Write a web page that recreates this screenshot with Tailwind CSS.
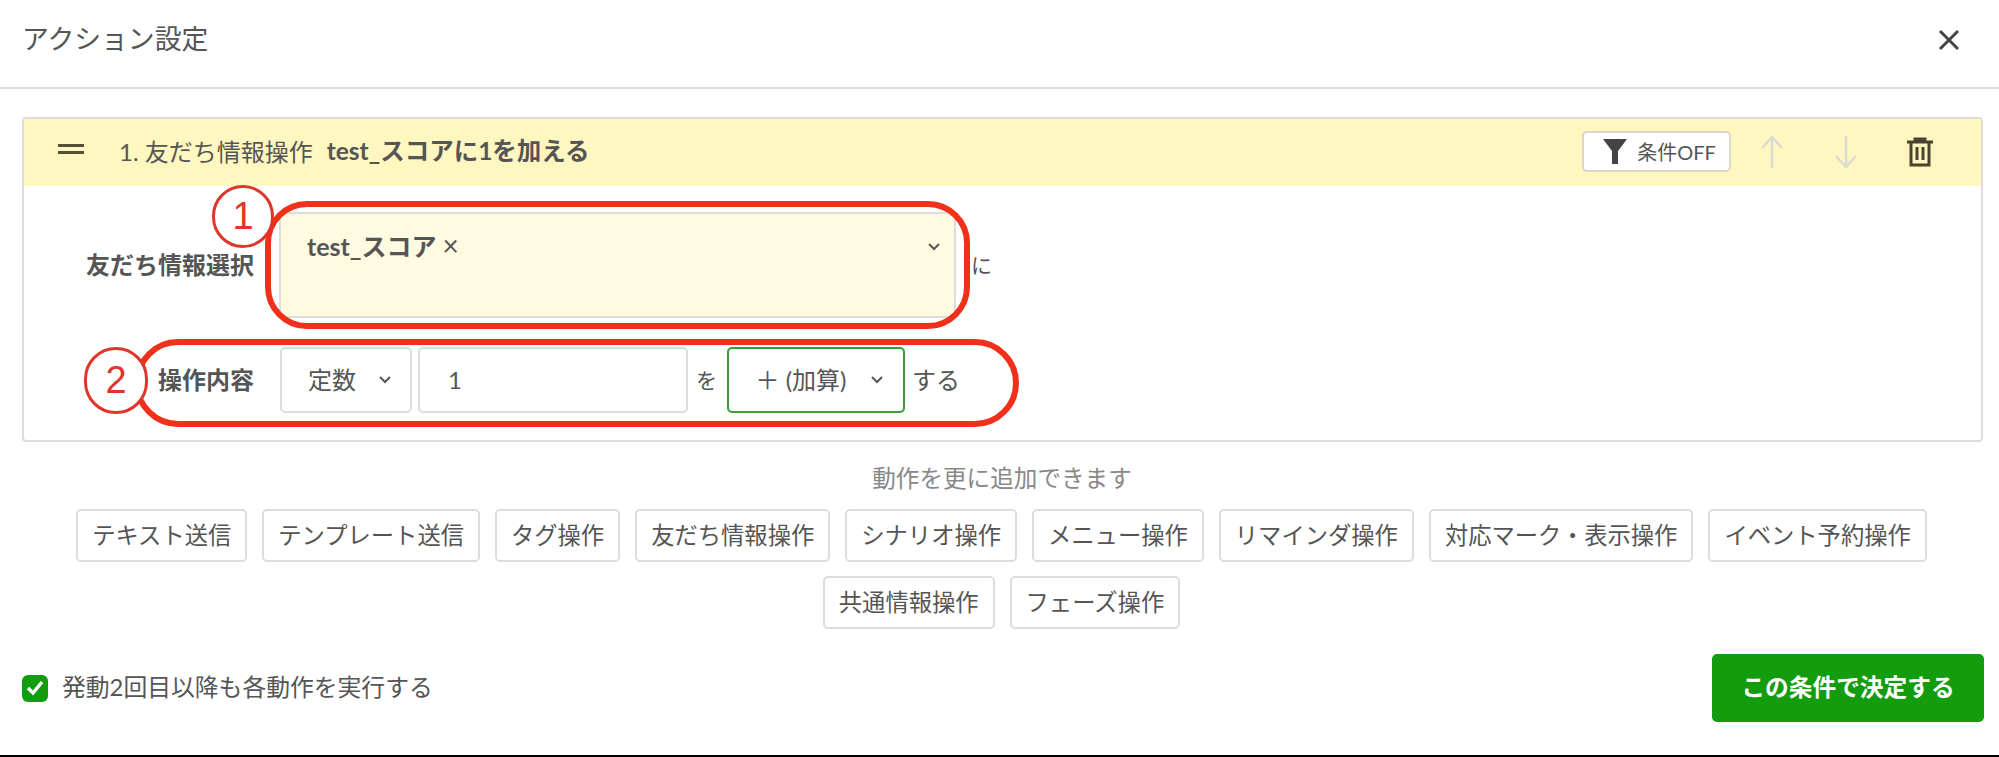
<!DOCTYPE html>
<html lang="ja">
<head>
    <meta charset="UTF-8">
    <title>アクション設定</title>
    <script src="https://cdn.jsdelivr.net/npm/@tailwindcss/browser@4"></script>
</head>
<body class="bg-white">
    <div class="relative w-[1999px] h-[757px] overflow-hidden flex flex-col border-b-2 border-black text-[#555] text-[24px] font-['Lato','Noto_Sans_CJK_JP',sans-serif]">

        <!-- modal header -->
        <header class="h-[89px] shrink-0 flex items-center justify-between pl-[22px] pr-[39px] border-b-2 border-[#ddd]">
            <h1 class="text-[26.8px] font-normal pb-[9px]">アクション設定</h1>
            <svg class="w-[22px] h-[22px] mb-[8px]" viewBox="0 0 22 22" fill="none" stroke="#444" stroke-width="3"><path d="M2 2l18 18M20 2L2 20"/></svg>
        </header>

        <!-- action card -->
        <section class="mt-[28px] ml-[22px] mr-[16px] h-[325px] shrink-0 border-2 border-[#ddd] rounded-[4px]">
            <div class="h-[67px] bg-[#fef7bf] flex items-center pl-[34px] pr-[48px] pb-[2px]">
                <svg class="w-[26px] h-[10px] mb-[6px]" viewBox="0 0 26 10" fill="#55503a"><rect width="26" height="3"/><rect y="7" width="26" height="3"/></svg>
                <span class="ml-[35px]">1. 友だち情報操作</span>
                <span class="ml-[14px] text-[24.5px] font-bold">test_スコアに1を加える</span>
                <button class="ml-auto mr-[3px] pl-[6px] w-[149px] h-[41px] bg-white border-2 border-[#ddd6c8] rounded-[5px] flex items-center justify-center gap-[10px] text-[20px]">
                    <svg class="w-[24px] h-[25px]" viewBox="0 0 24 25" fill="#444"><path d="M0 0h24L15 12v13h-6V12z"/></svg>
                    条件OFF
                </button>
                <svg class="ml-[26px] w-[24px] h-[34px]" viewBox="0 0 24 34" fill="none" stroke="#dcd8d2" stroke-width="2.4"><path d="M12 33V2M2 13L12 2l10 11"/></svg>
                <svg class="ml-[50px] w-[24px] h-[34px]" viewBox="0 0 24 34" fill="none" stroke="#dcd8d2" stroke-width="2.4"><path d="M12 1v31M2 21l10 11 10-11"/></svg>
                <svg class="ml-[49px] w-[26px] h-[30px]" viewBox="0 0 26 30" fill="none" stroke="#4a4530" stroke-width="3"><path d="M0 5h26M8 5V2h10v3M4 5v23h18V5M10 10v13M16 10v13"/></svg>
            </div>

            <div class="flex flex-col gap-[29px] pt-[26px]">
                <div class="flex items-center">
                    <label class="w-[230px] text-right font-bold">友だち情報選択</label>
                    <div class="ml-[25px] w-[677px] h-[106px] bg-[#fffbe0] border-2 border-[#ddd] rounded-[4px] flex justify-between pl-[26px] pr-[14px] pt-[15px]">
                        <span class="font-bold text-[25px] h-[32px] leading-[32px]">test_スコア<span class="font-normal text-[28px] ml-[6px]">×</span></span>
                        <svg class="w-[12px] h-[8px] mt-[14px]" viewBox="0 0 12 8" fill="none" stroke="#555" stroke-width="2"><path d="M1 1l5 5 5-5"/></svg>
                    </div>
                    <span class="ml-[15px] text-[21px]">に</span>
                </div>

                <div class="flex items-center">
                    <label class="w-[230px] text-right font-bold">操作内容</label>
                    <div class="ml-[26px] w-[132px] h-[66px] border-2 border-[#ddd] rounded-[5px] flex items-center justify-center gap-[22px] pl-[8px]">
                        定数
                        <svg class="w-[14px] h-[10px]" viewBox="0 0 14 10" fill="none" stroke="#555" stroke-width="2"><path d="M2 2l5 5 5-5"/></svg>
                    </div>
                    <div class="ml-[6px] w-[270px] h-[66px] border-2 border-[#ddd] rounded-[5px] flex items-center pl-[28px]">1</div>
                    <span class="ml-[8px] w-[31px] text-[21px]">を</span>
                    <div class="w-[178px] h-[66px] border-2 border-[#3f9a3a] rounded-[5px] flex items-center justify-center gap-[24px]">
                        <span class="whitespace-nowrap ml-[8px]">＋ (加算)</span>
                        <svg class="w-[14px] h-[10px]" viewBox="0 0 14 10" fill="none" stroke="#555" stroke-width="2"><path d="M2 2l5 5 5-5"/></svg>
                    </div>
                    <span class="ml-[7px]">する</span>
                </div>
            </div>
        </section>

        <!-- add more actions -->
        <p class="mt-[20px] pl-[5px] text-center text-[#888] text-[23.6px] leading-[32px]">動作を更に追加できます</p>
        <div class="mt-[15px] ml-[22px] mr-[18px] flex flex-wrap justify-center gap-x-[15px] gap-y-[14px] text-[23.3px]">
            <button class="h-[53px] px-[14px] border-2 border-[#ddd] rounded-[5px]">テキスト送信</button>
            <button class="h-[53px] px-[14px] border-2 border-[#ddd] rounded-[5px]">テンプレート送信</button>
            <button class="h-[53px] px-[14px] border-2 border-[#ddd] rounded-[5px]">タグ操作</button>
            <button class="h-[53px] px-[14px] border-2 border-[#ddd] rounded-[5px]">友だち情報操作</button>
            <button class="h-[53px] px-[14px] border-2 border-[#ddd] rounded-[5px]">シナリオ操作</button>
            <button class="h-[53px] px-[14px] border-2 border-[#ddd] rounded-[5px]">メニュー操作</button>
            <button class="h-[53px] px-[14px] border-2 border-[#ddd] rounded-[5px]">リマインダ操作</button>
            <button class="h-[53px] px-[14px] border-2 border-[#ddd] rounded-[5px]">対応マーク・表示操作</button>
            <button class="h-[53px] px-[14px] border-2 border-[#ddd] rounded-[5px]">イベント予約操作</button>
            <button class="h-[53px] px-[14px] border-2 border-[#ddd] rounded-[5px]">共通情報操作</button>
            <button class="h-[53px] px-[14px] border-2 border-[#ddd] rounded-[5px]">フェーズ操作</button>
        </div>

        <!-- footer -->
        <div class="mt-[25px] ml-[22px] mr-[15px] flex items-center justify-between">
            <label class="flex items-center gap-[14px] text-[23.8px]">
                <span class="w-[26px] h-[27px] bg-[#139c0e] rounded-[6px] flex items-center justify-center">
                    <svg class="w-[18px] h-[16px]" viewBox="0 0 18 16" fill="none" stroke="#fff" stroke-width="3.4"><path d="M2 8l5 5 9-11"/></svg>
                </span>
                発動2回目以降も各動作を実行する
            </label>
            <button class="w-[272px] h-[68px] bg-[#139c0e] rounded-[5px] text-white text-[23.7px] font-bold">この条件で決定する</button>
        </div>

        <!-- red annotations drawn over the form -->
        <div class="absolute left-[265px] top-[201px] w-[705px] h-[128px] border-[6px] border-[#f0301a] rounded-[42px]"></div>
        <div class="absolute left-[134px] top-[339px] w-[885px] h-[88px] border-[6px] border-[#f0301a] rounded-[44px]"></div>
        <div class="absolute left-[212px] top-[185px] w-[62px] h-[63px] bg-white border-[3px] border-[#e0352b] rounded-full flex items-center justify-center text-[#e0352b] text-[38px] font-['Liberation_Sans',sans-serif]">1</div>
        <div class="absolute left-[84px] top-[347px] w-[64px] h-[67px] bg-white border-[3px] border-[#e0352b] rounded-full flex items-center justify-center text-[#e0352b] text-[38px] font-['Liberation_Sans',sans-serif]">2</div>
    </div>
</body>
</html>
